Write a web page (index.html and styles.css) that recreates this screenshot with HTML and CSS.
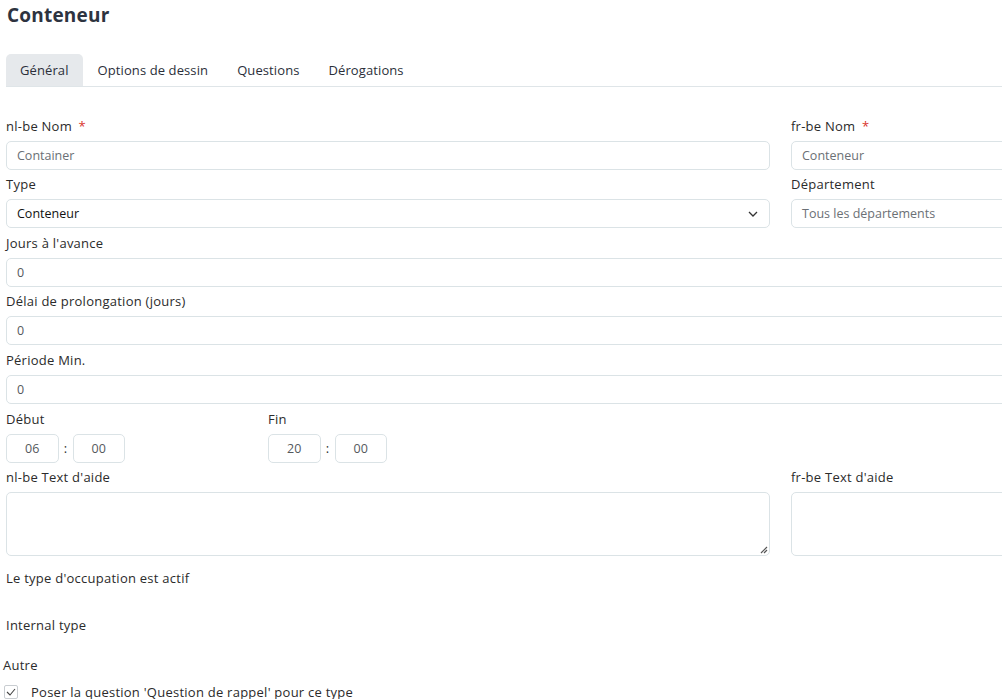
FILE: index.html
```html
<!DOCTYPE html>
<html lang="fr">
<head>
<meta charset="utf-8">
<title>Conteneur</title>
<link rel="stylesheet" href="styles.css">
</head>
<body>
<div class="page">
  <h1 class="title">Conteneur</h1>
  <nav class="tabs">
    <span class="tab active">Général</span>
    <span class="tab">Options de dessin</span>
    <span class="tab">Questions</span>
    <span class="tab">Dérogations</span>
  </nav>
  <form class="form">
    <div class="row two">
      <div class="group">
        <label class="label">nl-be Nom <span class="req">*</span></label>
        <div class="input placeholder">Container</div>
      </div>
      <div class="group">
        <label class="label">fr-be Nom <span class="req">*</span></label>
        <div class="input placeholder">Conteneur</div>
      </div>
    </div>
    <div class="row two">
      <div class="group">
        <label class="label">Type</label>
        <div class="input select">
          <span>Conteneur</span>
          <svg class="chev" width="10" height="6" viewBox="0 0 10 6"><path d="M1 1 L5 5 L9 1" fill="none" stroke="#333" stroke-width="1.3"/></svg>
        </div>
      </div>
      <div class="group">
        <label class="label">Département</label>
        <div class="input placeholder">Tous les départements</div>
      </div>
    </div>
    <div class="group">
      <label class="label">Jours à l'avance</label>
      <div class="input value">0</div>
    </div>
    <div class="group">
      <label class="label">Délai de prolongation (jours)</label>
      <div class="input value">0</div>
    </div>
    <div class="group">
      <label class="label">Période Min.</label>
      <div class="input value">0</div>
    </div>
    <div class="row times">
      <div class="group">
        <label class="label">Début</label>
        <div class="time">
          <div class="input tbox">06</div><span class="colon">:</span><div class="input tbox">00</div>
        </div>
      </div>
      <div class="group">
        <label class="label">Fin</label>
        <div class="time">
          <div class="input tbox">20</div><span class="colon">:</span><div class="input tbox">00</div>
        </div>
      </div>
    </div>
    <div class="row two">
      <div class="group">
        <label class="label">nl-be Text d'aide</label>
        <div class="input textarea">
          <svg class="grip" width="9" height="9" viewBox="0 0 9 9"><path d="M8 2 L2 8 M8 5 L5 8" stroke="#555" stroke-width="1.2"/></svg>
        </div>
      </div>
      <div class="group">
        <label class="label">fr-be Text d'aide</label>
        <div class="input textarea"></div>
      </div>
    </div>
    <div class="switch-label first">Le type d'occupation est actif</div>
    <div class="switch-label second">Internal type</div>
    <div class="section">Autre</div>
    <div class="check-row">
      <span class="checkbox"><svg width="10" height="8" viewBox="0 0 10 8"><path d="M1 4 L4 7 L9 1" fill="none" stroke="#444" stroke-width="1.1"/></svg></span>
      <span>Poser la question 'Question de rappel' pour ce type</span>
    </div>
  </form>
</div>
</body>
</html>
```
FILE: styles.css
```css
html, body {
  margin: 0;
  padding: 0;
  overflow: hidden;
  background: #fff;
}
body {
  font-family: "Open Sans", "DejaVu Sans", sans-serif;
  font-size: 13px;
  letter-spacing: 0.25px;
  color: #2b2b2b;
}
.page {
  width: 1555px;
  padding: 0 0 0 6px;
}
.title {
  margin: 0;
  padding: 4px 0 0 1px;
  height: 24px;
  line-height: 22px;
  font-size: 19px;
  letter-spacing: 0.2px;
  font-weight: 700;
  color: #2d3340;
}
.tabs {
  display: flex;
  margin-top: 26px;
  border-bottom: 1.5px solid #dfe5e8;
  height: 32px;
}
.tab {
  display: flex;
  align-items: center;
  padding: 0 14px 1px 14px;
  margin-right: 1px;
  color: #2b2f3a;
  letter-spacing: 0.1px;
  border-radius: 5px 5px 0 0;
}
.tab.active {
  background: #e6e9ec;
}
.form {
  padding-top: 24px;
  display: flex;
  flex-direction: column;
}
.row {
  display: flex;
}
.row.two {
  gap: 21px;
}
.row.two > .group {
  width: 764px;
}
.row.times > .group {
  width: 262px;
}
.group {
  display: flex;
  flex-direction: column;
}
.label {
  display: block;
  height: 20px;
  line-height: 20px;
  margin: 4.6px 0 5px;
  color: #2b2b2b;
}
.req {
  color: #d9342b;
  margin-left: 3px;
}
.input {
  box-sizing: border-box;
  height: 29px;
  border: 1px solid #dbe3e6;
  border-radius: 5px;
  padding: 0 10px;
  display: flex;
  align-items: center;
  background: #fff;
  color: #222;
  font-size: 12.5px;
  letter-spacing: 0;
}
.placeholder {
  color: #6b7075;
}
.value {
  color: #55595d;
}
.select {
  justify-content: space-between;
  color: #111;
}
.chev {
  margin-right: 1px;
}
.time {
  display: flex;
  align-items: center;
}
.tbox {
  width: 52.5px;
  justify-content: center;
  padding: 0;
  color: #55595d;
}
.colon {
  width: 14px;
  text-align: center;
  color: #333;
}
.textarea {
  height: 64px;
  position: relative;
}
.grip {
  position: absolute;
  right: 1px;
  bottom: 1px;
}
.switch-label {
  height: 20px;
  line-height: 20px;
}
.switch-label.first {
  margin-top: 12px;
}
.switch-label.second {
  margin-top: 27px;
}
.section {
  height: 20px;
  line-height: 20px;
  margin-top: 20px;
  margin-left: -3px;
}
.check-row {
  display: flex;
  align-items: center;
  gap: 13px;
  margin-top: 7px;
  margin-left: -2px;
  height: 20px;
}
.checkbox {
  box-sizing: border-box;
  width: 14px;
  height: 14px;
  border: 1px solid #c9cdd1;
  border-radius: 2px;
  display: flex;
  align-items: center;
  justify-content: center;
}
```
